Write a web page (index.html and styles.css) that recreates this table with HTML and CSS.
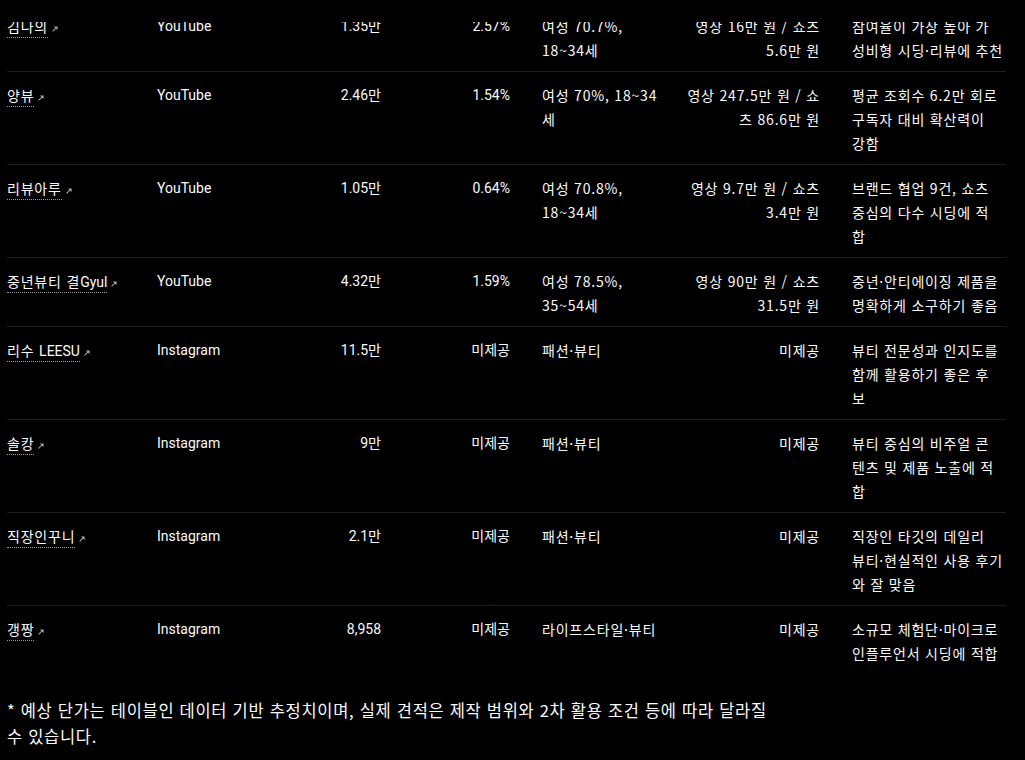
FILE: index.html
```html
<!DOCTYPE html>
<html lang="ko">
<head>
<meta charset="utf-8">
<title>인플루언서 후보</title>
<link rel="stylesheet" href="styles.css">
</head>
<body>
<main class="page">
  <div class="viewport">
    <table class="grid">
      <colgroup>
        <col class="c-name"><col class="c-plat"><col class="c-fol"><col class="c-eng"><col class="c-aud"><col class="c-price"><col class="c-note">
      </colgroup>
      <tbody>
        <tr>
          <td class="name"><a class="ch" href="#"><span class="nm">김나의</span><svg class="ext" width="6" height="6" viewBox="0 0 6 6"><path d="M0.6 5.4 L4.4 1.6" stroke="#a8a8a8" stroke-width="1.1" fill="none"/><path d="M1.9 0.4 H5.6 V4.1 Z" fill="#a8a8a8"/></svg></a></td>
          <td class="plat">YouTube</td>
          <td class="num">1.35만</td>
          <td class="num">2.57%</td>
          <td class="aud">여성 70.7%,<br>18~34세</td>
          <td class="price">영상 16만 원 / 쇼츠<br>5.6만 원</td>
          <td class="note">참여율이 가장 높아 가<br>성비형 시딩·리뷰에 추천</td>
        </tr>
        <tr>
          <td class="name"><a class="ch" href="#"><span class="nm">양뷰</span><svg class="ext" width="6" height="6" viewBox="0 0 6 6"><path d="M0.6 5.4 L4.4 1.6" stroke="#a8a8a8" stroke-width="1.1" fill="none"/><path d="M1.9 0.4 H5.6 V4.1 Z" fill="#a8a8a8"/></svg></a></td>
          <td class="plat">YouTube</td>
          <td class="num">2.46만</td>
          <td class="num">1.54%</td>
          <td class="aud">여성 70%, 18~34<br>세</td>
          <td class="price">영상 247.5만 원 / 쇼<br>츠 86.6만 원</td>
          <td class="note">평균 조회수 6.2만 회로<br>구독자 대비 확산력이<br>강함</td>
        </tr>
        <tr>
          <td class="name"><a class="ch" href="#"><span class="nm">리뷰아루</span><svg class="ext" width="6" height="6" viewBox="0 0 6 6"><path d="M0.6 5.4 L4.4 1.6" stroke="#a8a8a8" stroke-width="1.1" fill="none"/><path d="M1.9 0.4 H5.6 V4.1 Z" fill="#a8a8a8"/></svg></a></td>
          <td class="plat">YouTube</td>
          <td class="num">1.05만</td>
          <td class="num">0.64%</td>
          <td class="aud">여성 70.8%,<br>18~34세</td>
          <td class="price">영상 9.7만 원 / 쇼츠<br>3.4만 원</td>
          <td class="note">브랜드 협업 9건, 쇼츠<br>중심의 다수 시딩에 적<br>합</td>
        </tr>
        <tr>
          <td class="name"><a class="ch" href="#"><span class="nm">중년뷰티 결<span class="en" lang="en">Gyul</span></span><svg class="ext" width="6" height="6" viewBox="0 0 6 6"><path d="M0.6 5.4 L4.4 1.6" stroke="#a8a8a8" stroke-width="1.1" fill="none"/><path d="M1.9 0.4 H5.6 V4.1 Z" fill="#a8a8a8"/></svg></a></td>
          <td class="plat">YouTube</td>
          <td class="num">4.32만</td>
          <td class="num">1.59%</td>
          <td class="aud">여성 78.5%,<br>35~54세</td>
          <td class="price">영상 90만 원 / 쇼츠<br>31.5만 원</td>
          <td class="note">중년·안티에이징 제품을<br>명확하게 소구하기 좋음</td>
        </tr>
        <tr>
          <td class="name"><a class="ch" href="#"><span class="nm">리수 <span class="en" lang="en">LEESU</span></span><svg class="ext" width="6" height="6" viewBox="0 0 6 6"><path d="M0.6 5.4 L4.4 1.6" stroke="#a8a8a8" stroke-width="1.1" fill="none"/><path d="M1.9 0.4 H5.6 V4.1 Z" fill="#a8a8a8"/></svg></a></td>
          <td class="plat">Instagram</td>
          <td class="num">11.5만</td>
          <td class="num">미제공</td>
          <td class="aud">패션·뷰티</td>
          <td class="price">미제공</td>
          <td class="note">뷰티 전문성과 인지도를<br>함께 활용하기 좋은 후<br>보</td>
        </tr>
        <tr>
          <td class="name"><a class="ch" href="#"><span class="nm">솔캉</span><svg class="ext" width="6" height="6" viewBox="0 0 6 6"><path d="M0.6 5.4 L4.4 1.6" stroke="#a8a8a8" stroke-width="1.1" fill="none"/><path d="M1.9 0.4 H5.6 V4.1 Z" fill="#a8a8a8"/></svg></a></td>
          <td class="plat">Instagram</td>
          <td class="num">9만</td>
          <td class="num">미제공</td>
          <td class="aud">패션·뷰티</td>
          <td class="price">미제공</td>
          <td class="note">뷰티 중심의 비주얼 콘<br>텐츠 및 제품 노출에 적<br>합</td>
        </tr>
        <tr>
          <td class="name"><a class="ch" href="#"><span class="nm">직장인꾸니</span><svg class="ext" width="6" height="6" viewBox="0 0 6 6"><path d="M0.6 5.4 L4.4 1.6" stroke="#a8a8a8" stroke-width="1.1" fill="none"/><path d="M1.9 0.4 H5.6 V4.1 Z" fill="#a8a8a8"/></svg></a></td>
          <td class="plat">Instagram</td>
          <td class="num">2.1만</td>
          <td class="num">미제공</td>
          <td class="aud">패션·뷰티</td>
          <td class="price">미제공</td>
          <td class="note">직장인 타깃의 데일리<br>뷰티·현실적인 사용 후기<br>와 잘 맞음</td>
        </tr>
        <tr>
          <td class="name"><a class="ch" href="#"><span class="nm">갱짱</span><svg class="ext" width="6" height="6" viewBox="0 0 6 6"><path d="M0.6 5.4 L4.4 1.6" stroke="#a8a8a8" stroke-width="1.1" fill="none"/><path d="M1.9 0.4 H5.6 V4.1 Z" fill="#a8a8a8"/></svg></a></td>
          <td class="plat">Instagram</td>
          <td class="num">8,958</td>
          <td class="num">미제공</td>
          <td class="aud">라이프스타일·뷰티</td>
          <td class="price">미제공</td>
          <td class="note">소규모 체험단·마이크로<br>인플루언서 시딩에 적합</td>
        </tr>
      </tbody>
    </table>
  </div>
  <p class="footnote">* 예상 단가는 테이블인 데이터 기반 추정치이며, 실제 견적은 제작 범위와 2차 활용 조건 등에 따라 달라질 수 있습니다.</p>
</main>
</body>
</html>
```

FILE: styles.css
```css
html, body {
  margin: 0;
  padding: 0;
  background: #000;
}

body {
  color: #fafafa;
  font-family: "Noto Sans CJK KR", sans-serif;
  font-size: 14px;
  letter-spacing: 0.8px;
}

.page {
  padding: 0 0 0 7px;
}

.viewport {
  margin-top: 22px;
  overflow: hidden;
}

.grid {
  margin-top: -19px;
  width: 999px;
  table-layout: fixed;
  border-collapse: collapse;
  border-spacing: 0;
}

.c-name { width: 134px; }
.c-plat { width: 120px; }
.c-fol { width: 136px; }
.c-eng { width: 129px; }
.c-aud { width: 145.5px; }
.c-price { width: 164.5px; }
.c-note { width: 170px; }

.grid td {
  padding: 11px 16px 9px;
  line-height: 24px;
  vertical-align: top;
  text-align: left;
  white-space: nowrap;
  border-bottom: 1px solid #1e1e1e;
}

.grid tr:last-child td {
  border-bottom: none;
}

.grid td.name {
  padding-left: 0;
}

.grid td.plat,
.grid td.num,
.en {
  font-family: Roboto, "Noto Sans CJK KR", sans-serif;
  letter-spacing: 0;
}

.grid td.num {
  text-align: right;
}

.grid td.aud {
  padding-right: 13px;
}

.grid td.price {
  text-align: right;
  padding-left: 13.5px;
}

.grid td.note {
  padding-right: 0;
}

.ch {
  color: inherit;
  text-decoration: none;
}

.nm {
  padding-bottom: 1px;
  border-bottom: 1px dotted rgba(255, 255, 255, 0.6);
}

.ext {
  margin-left: 4px;
}

.footnote {
  margin: 23px 0 0;
  max-width: 775px;
  font-size: 16.5px;
  letter-spacing: 0.7px;
  line-height: 26px;
}
```
